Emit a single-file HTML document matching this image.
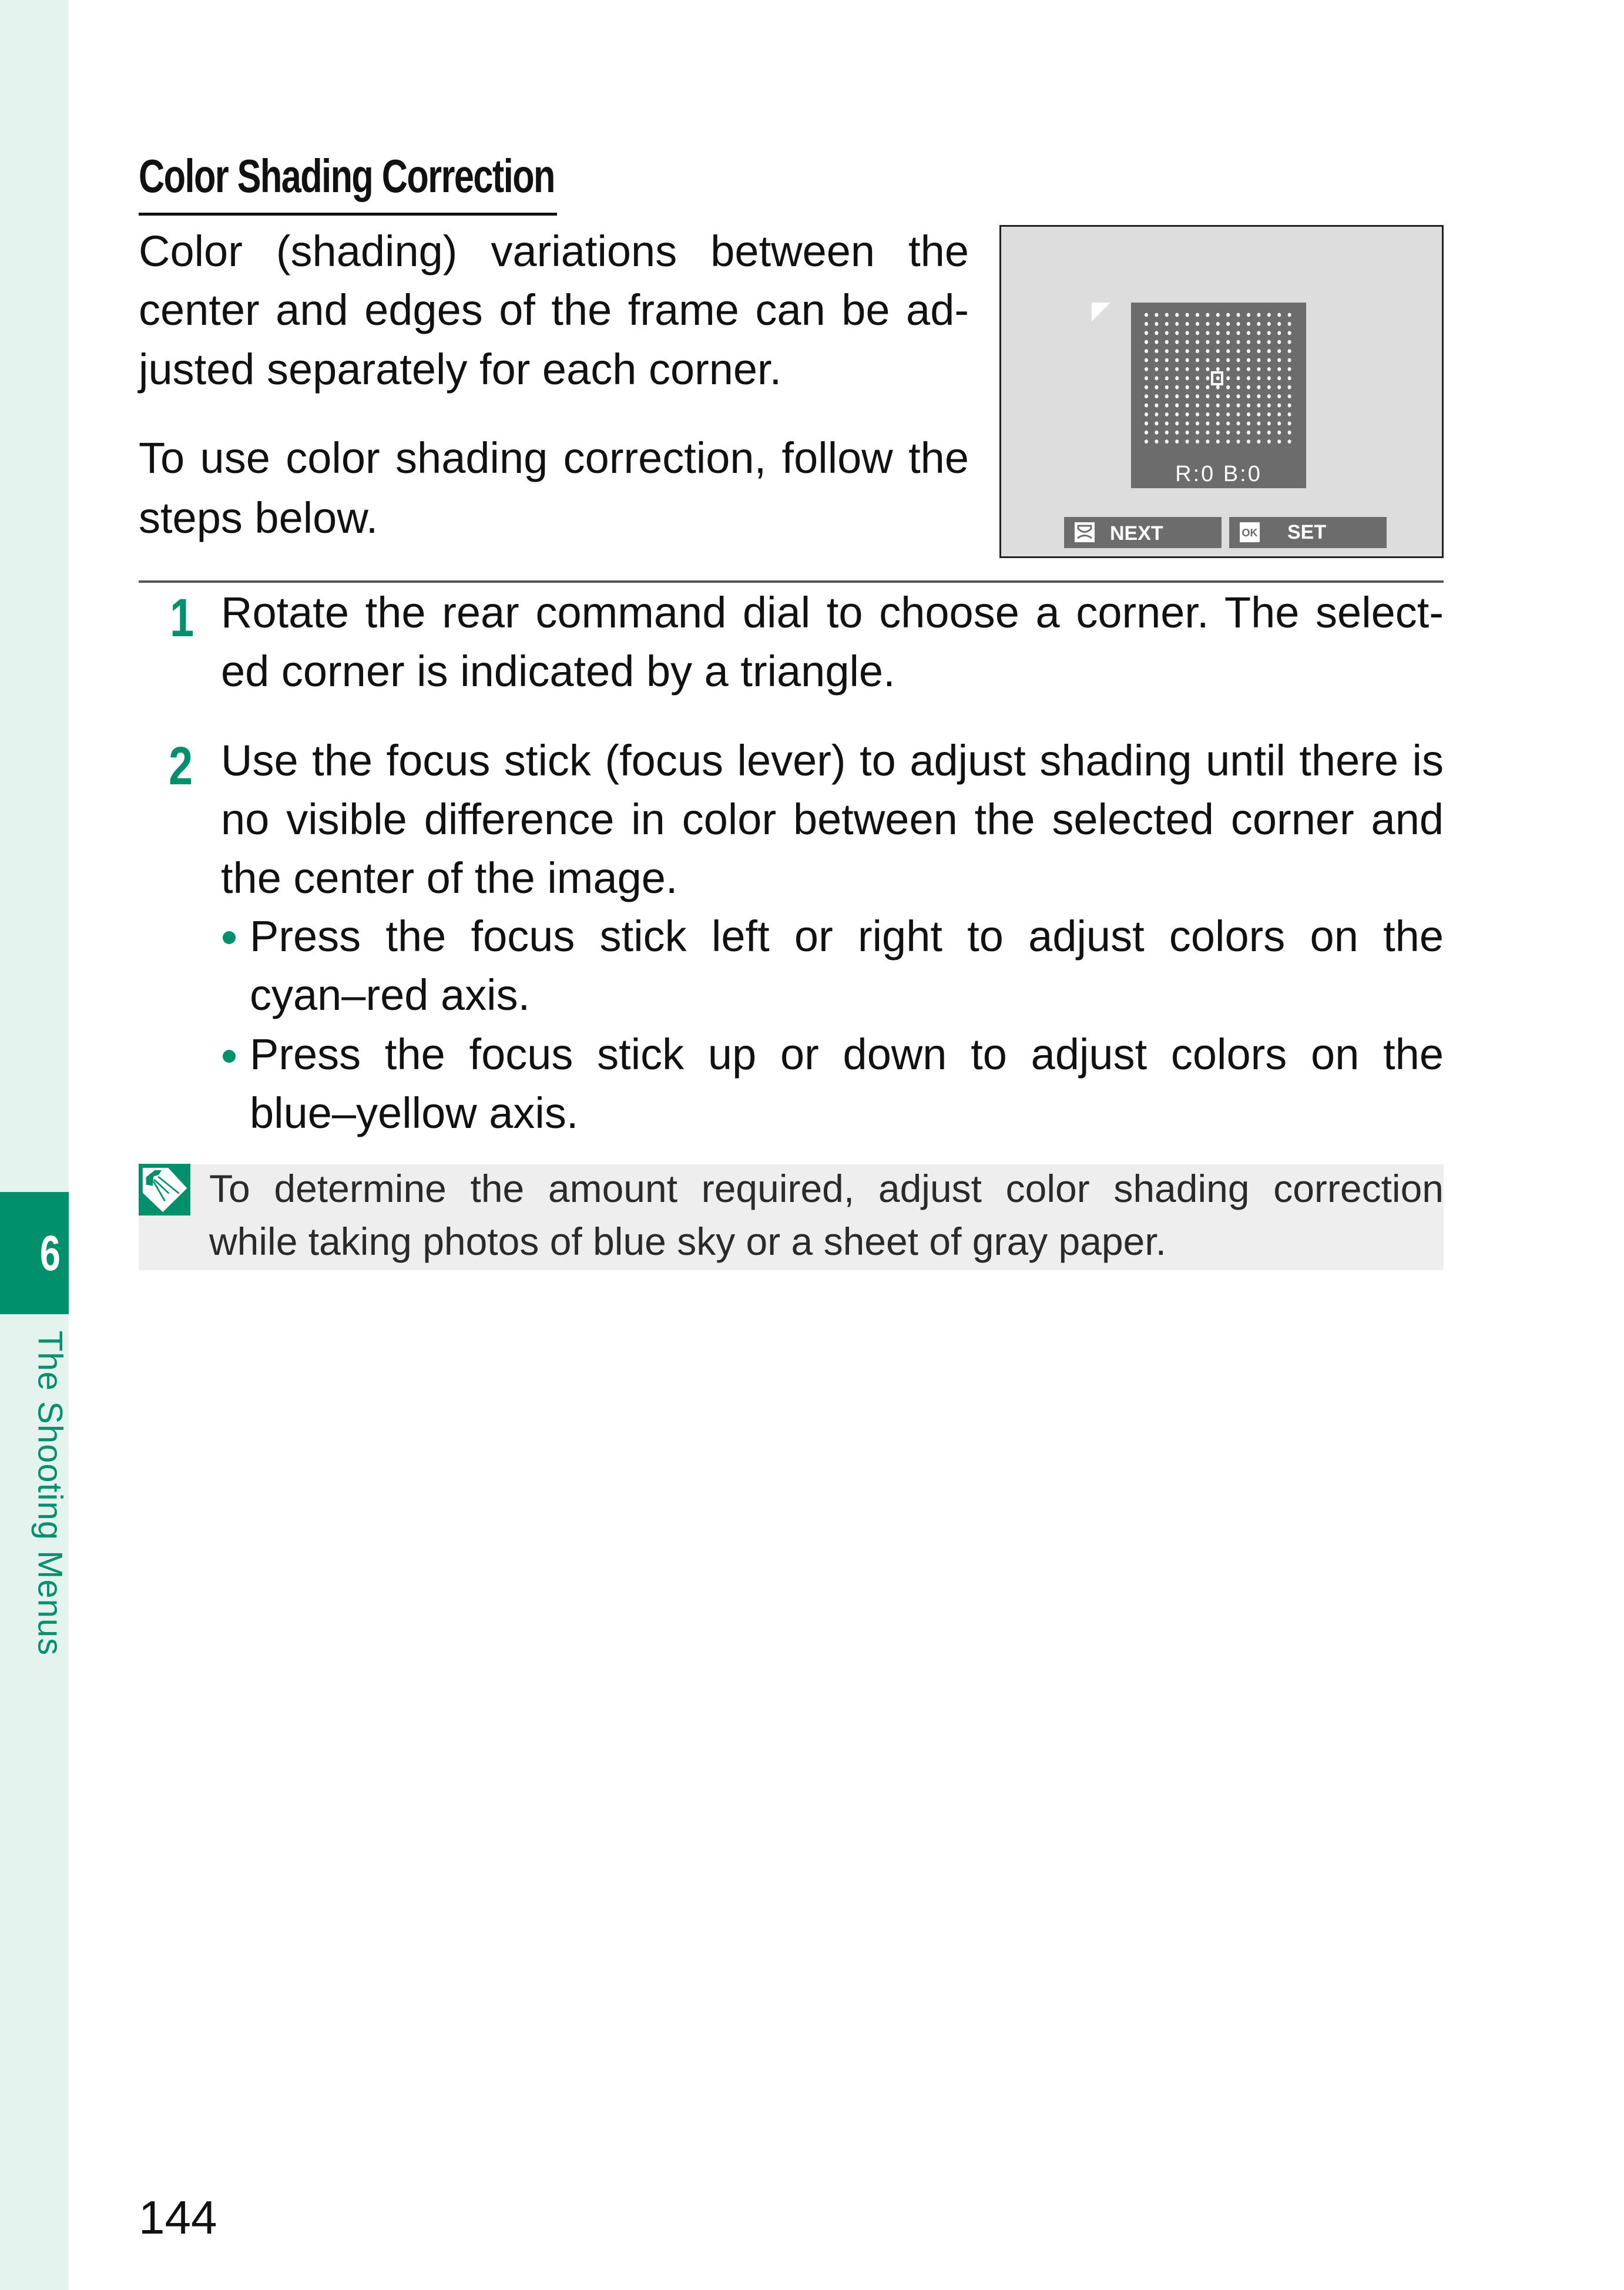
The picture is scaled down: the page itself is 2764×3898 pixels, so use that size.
<!DOCTYPE html>
<html><head><meta charset="utf-8">
<style>
html,body{margin:0;padding:0;}
body{width:2764px;height:3898px;position:relative;background:#fff;overflow:hidden;font-family:"Liberation Sans",sans-serif;color:#111;}
.side{position:absolute;left:0;top:0;width:117px;height:3898px;background:#e4f3ee;}
.tab{position:absolute;left:0;top:2029px;width:117px;height:208px;background:#00906b;}
.tab span{position:absolute;right:8px;top:56px;color:#fff;font-weight:bold;font-size:84px;transform:scaleX(0.75);}
.vt{position:absolute;left:85px;top:2265px;transform-origin:0 0;transform:rotate(90deg) translateY(-50%);color:#00906b;font-size:58px;white-space:nowrap;letter-spacing:1px;}
.l{position:absolute;height:100px;line-height:100px;font-size:74px;white-space:nowrap;}
.j{text-align:justify;text-align-last:justify;white-space:normal;overflow:hidden;}
.n{font-size:66px;color:#2a2a2a;}
.num{position:absolute;color:#00906b;font-weight:bold;font-size:92px;line-height:100px;transform:scaleX(0.8);}
.bul{position:absolute;width:22px;height:22px;border-radius:50%;background:#00906b;}
</style></head><body>
<div class="side"></div>
<div class="tab"><span>6</span></div>
<div class="vt">The Shooting Menus</div>

<div style="position:absolute;left:236px;top:255px;font-weight:bold;font-size:80px;line-height:90px;white-space:nowrap;transform-origin:0 0;transform:scaleX(0.765);letter-spacing:-2px;">Color Shading Correction</div>
<div style="position:absolute;left:236px;top:362px;width:712px;height:5px;background:#111;"></div>

<div class="l j" style="left:236px;top:378px;width:1413px;">Color (shading) variations between the</div>
<div class="l j" style="left:236px;top:478px;width:1413px;">center and edges of the frame can be ad-</div>
<div class="l" style="left:236px;top:579px;">justed separately for each corner.</div>
<div class="l j" style="left:236px;top:730px;width:1413px;">To use color shading correction, follow the</div>
<div class="l" style="left:236px;top:832px;">steps below.</div>

<svg style="position:absolute;left:1701px;top:383px" width="756" height="567" viewBox="0 0 756 567">
<rect x="1.5" y="1.5" width="753" height="564" fill="#dcdddc" stroke="#222" stroke-width="3"/>
<polygon points="157,132 189,132 157,164" fill="#fff"/>
<rect x="224" y="132" width="298" height="316" fill="#6c6c6c"/>
<g id="dots" fill="#fff"></g>
<rect x="362" y="251" width="17" height="20" fill="none" stroke="#fff" stroke-width="4"/>
<text x="373" y="436" fill="#fff" font-family="Liberation Sans Narrow, Liberation Sans, sans-serif" font-size="38" text-anchor="middle" letter-spacing="3">R:0  B:0</text>
<rect x="110" y="497" width="268" height="53" fill="#6c6c6c"/>
<rect x="391" y="497" width="268" height="53" fill="#6c6c6c"/>
<rect x="128" y="506" width="34" height="34" fill="#fff"/>
<path d="M134 512 h22 v5 q-11 11 -22 0 z M133 533 q12 -9 24 0" fill="none" stroke="#6c6c6c" stroke-width="3"/>
<rect x="409" y="506" width="34" height="34" fill="#fff"/>
<text x="426" y="530" fill="#6c6c6c" font-family="Liberation Sans, sans-serif" font-weight="bold" font-size="18" text-anchor="middle">OK</text>
<text x="188" y="536" fill="#fff" font-family="Liberation Sans, sans-serif" font-weight="bold" font-size="34">NEXT</text>
<text x="490" y="534" fill="#fff" font-family="Liberation Sans, sans-serif" font-weight="bold" font-size="34">SET</text>
</svg>
<script>
(function(){var g=document.getElementById('dots');var s='';for(var r=0;r<15;r++)for(var c=0;c<15;c++){s+='<ellipse cx="'+(250+c*17.4)+'" cy="'+(153+r*15.4)+'" rx="3" ry="3.4"/>';}g.innerHTML=s;})();
</script>

<div style="position:absolute;left:236px;top:988px;width:2221px;height:4px;background:#555;"></div>

<div class="num" style="left:284px;top:1002px;">1</div>
<div class="l j" style="left:376px;top:993px;width:2081px;">Rotate the rear command dial to choose a corner. The select-</div>
<div class="l" style="left:376px;top:1093px;">ed corner is indicated by a triangle.</div>

<div class="num" style="left:282px;top:1254px;">2</div>
<div class="l j" style="left:376px;top:1245px;width:2081px;">Use the focus stick (focus lever) to adjust shading until there is</div>
<div class="l j" style="left:376px;top:1345px;width:2081px;">no visible difference in color between the selected corner and</div>
<div class="l" style="left:376px;top:1445px;">the center of the image.</div>
<div class="bul" style="left:379px;top:1585px;"></div>
<div class="l j" style="left:425px;top:1544px;width:2032px;">Press the focus stick left or right to adjust colors on the</div>
<div class="l" style="left:425px;top:1644px;">cyan–red axis.</div>
<div class="bul" style="left:379px;top:1787px;"></div>
<div class="l j" style="left:425px;top:1745px;width:2032px;">Press the focus stick up or down to adjust colors on the</div>
<div class="l" style="left:425px;top:1845px;">blue–yellow axis.</div>

<div style="position:absolute;left:236px;top:1982px;width:2221px;height:180px;background:#eeeeee;"></div>
<svg style="position:absolute;left:236px;top:1981px" width="88" height="88" viewBox="0 0 77 89" preserveAspectRatio="none">
<rect width="77" height="89" fill="#00906b"/>
<path d="M6 7 H44 L72 42 L36 83 L6 50 Z" fill="#fff"/>
<path d="M11 23 L24 11 H34 L30 19 L22 22 L21 38 L11 36 Z" fill="#00906b"/>
<path d="M23 27 L45 51 M29 22 L60 51 M22 30 L39 64" stroke="#00906b" stroke-width="2.5" fill="none"/>
</svg>
<div class="l n j" style="left:356px;top:1973px;width:2101px;">To determine the amount required, adjust color shading correction</div>
<div class="l n" style="left:356px;top:2063px;">while taking photos of blue sky or a sheet of gray paper.</div>

<div class="l" style="left:236px;top:3725px;font-size:80px;">144</div>
</body></html>
